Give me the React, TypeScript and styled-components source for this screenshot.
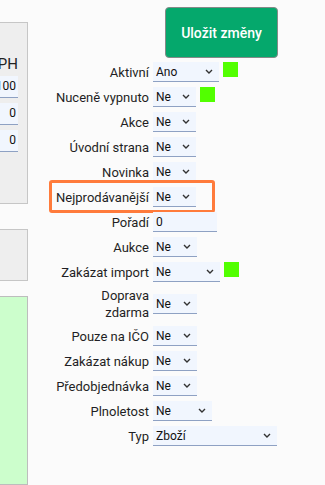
import React from 'react';
import styled, { createGlobalStyle } from 'styled-components';

const GlobalStyle = createGlobalStyle`
    body {
        margin: 0;
        background: #fbfbfb;
        font-family: Roboto, "Liberation Sans", sans-serif;
        color: #1f1f24;
        overflow: hidden;
    }
`

const StyledPage = styled.div`
    display: flex;
    flex-direction: row;
    min-height: 485px;
`

// panels of the product table, mostly scrolled out of view on the left
const StyledSideColumn = styled.div`
    width: 28px;
    flex-shrink: 0;
    display: flex;
    flex-direction: column;
`

const StyledPanel = styled.div<{ $green?: boolean; $height?: number; $top: number }>`
    box-sizing: border-box;
    margin-top: ${p => p.$top}px;
    height: ${p => (p.$height ? `${p.$height}px` : 'auto')};
    flex: ${p => (p.$height ? 'none' : '1')};
    background: ${p => (p.$green ? '#ccfecc' : '#eeeeee')};
    border: 1px solid ${p => (p.$green ? '#bdbdbd' : '#c6c6c6')};
    border-left: none;
    overflow: hidden;
`

const StyledPriceBox = styled.div`
    display: flex;
    flex-direction: column;
    align-items: flex-end;
    padding: 31px 9px 0 0;
`

const StyledPriceHead = styled.div`
    white-space: nowrap;
    font-size: 15px;
    line-height: 20px;
    color: #222;
`

const StyledPriceInputs = styled.div`
    display: flex;
    flex-direction: column;
    align-items: flex-end;
    gap: 5px;
    margin-top: 2px;
`

const StyledPriceInput = styled.div`
    box-sizing: border-box;
    flex-shrink: 0;
    width: 70px;
    height: 22px;
    padding-right: 2px;
    text-align: right;
    font-size: 12px;
    line-height: 21px;
    background: #f1f6fe;
    border-bottom: 1px solid #8ea1c3;
    color: #111;
`

const StyledForm = styled.div`
    margin-left: 26px;
    padding-top: 7px;
    display: flex;
    flex-direction: column;
    width: fit-content;
`

const StyledButtonBar = styled.div`
    display: flex;
    justify-content: flex-end;
    margin-bottom: 4px;
`

const StyledSaveButton = styled.button`
    box-sizing: border-box;
    width: 113px;
    height: 51px;
    margin-right: -1px;
    background: #05a86c;
    border: 1px solid #858a88;
    border-radius: 4px;
    color: #fff;
    font-family: Roboto, "Liberation Sans", sans-serif;
    font-size: 14px;
    font-weight: 500;
    cursor: pointer;
`

const StyledRows = styled.div`
    display: flex;
    flex-direction: column;
    gap: 5px;
`

const StyledRow = styled.div<{ $highlight?: boolean }>`
    position: relative;
    display: flex;
    flex-direction: row;
    align-items: center;

    ${p => p.$highlight && `
        &::after {
            content: '';
            position: absolute;
            left: -5px;
            top: -7px;
            bottom: -6px;
            width: 166px;
            box-sizing: border-box;
            border: 3px solid #ff7b3b;
            border-radius: 3px;
            pointer-events: none;
        }
    `}
`

const StyledLabel = styled.div`
    width: 95px;
    flex-shrink: 0;
    margin-right: 4px;
    text-align: right;
    white-space: nowrap;
    font-size: 13px;
    line-height: 17px;
    color: #1f1f24;
`

const StyledSelect = styled.div<{ $width: number }>`
    box-sizing: border-box;
    width: ${p => p.$width}px;
    height: 20px;
    display: flex;
    align-items: center;
    justify-content: space-between;
    padding: 0 6px 0 3px;
    background: #f1f6fe;
    border-bottom: 1px solid #8ea1c3;
    font-size: 12px;
    color: #111;
`

const StyledFlag = styled.div`
    align-self: flex-start;
    width: 15px;
    height: 15px;
    margin-left: 4px;
    background: #52ff00;
`

const Chevron = () => (
    <svg width="8" height="5" viewBox="0 0 8 5">
        <polyline points="1,1 4,4 7,1" fill="none" stroke="#333" strokeWidth="1.4" />
    </svg>
)

type FieldData = {
    label: string[];
    value: string;
    width: number;
    flag?: boolean;
    highlight?: boolean;
    input?: boolean;
}

const fields: FieldData[] = [
    { label: ['Aktivní'], value: 'Ano', width: 66, flag: true },
    { label: ['Nuceně vypnuto'], value: 'Ne', width: 43, flag: true },
    { label: ['Akce'], value: 'Ne', width: 43 },
    { label: ['Úvodní strana'], value: 'Ne', width: 43 },
    { label: ['Novinka'], value: 'Ne', width: 43 },
    { label: ['Nejprodávanější'], value: 'Ne', width: 43, highlight: true },
    { label: ['Pořadí'], value: '0', width: 64, input: true },
    { label: ['Aukce'], value: 'Ne', width: 44 },
    { label: ['Zakázat import'], value: 'Ne', width: 67, flag: true },
    { label: ['Doprava', 'zdarma'], value: 'Ne', width: 44 },
    { label: ['Pouze na IČO'], value: 'Ne', width: 44 },
    { label: ['Zakázat nákup'], value: 'Ne', width: 44 },
    { label: ['Předobjednávka'], value: 'Ne', width: 44 },
    { label: ['Plnoletost'], value: 'Ne', width: 59 },
    { label: ['Typ'], value: 'Zboží', width: 124 },
]

const App = () => {
    const rows = fields.map((f, i) => (
        <StyledRow key={i} $highlight={f.highlight}>
            <StyledLabel>
                {f.label.map((line, j) => <div key={j}>{line}</div>)}
            </StyledLabel>
            <StyledSelect $width={f.width}>
                <span>{f.value}</span>
                {!f.input && <Chevron />}
            </StyledSelect>
            {f.flag && <StyledFlag />}
        </StyledRow>
    ))

    return (
        <>
            <GlobalStyle />
            <StyledPage>
                <StyledSideColumn>
                    <StyledPanel $top={22} $height={182}>
                        <StyledPriceBox>
                            <StyledPriceHead>Cena s DPH</StyledPriceHead>
                            <StyledPriceInputs>
                                <StyledPriceInput>100</StyledPriceInput>
                                <StyledPriceInput>0</StyledPriceInput>
                                <StyledPriceInput>0</StyledPriceInput>
                            </StyledPriceInputs>
                        </StyledPriceBox>
                    </StyledPanel>
                    <StyledPanel $top={25} $height={52} />
                    <StyledPanel $top={15} $green />
                </StyledSideColumn>
                <StyledForm>
                    <StyledButtonBar>
                        <StyledSaveButton>Uložit změny</StyledSaveButton>
                    </StyledButtonBar>
                    <StyledRows>{rows}</StyledRows>
                </StyledForm>
            </StyledPage>
        </>
    );
};

export default App;
